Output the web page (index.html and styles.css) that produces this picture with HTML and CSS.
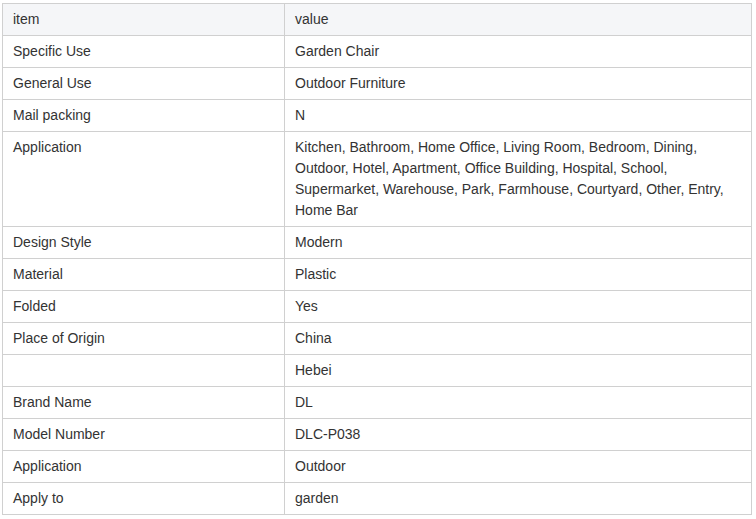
FILE: index.html
```html
<!DOCTYPE html>
<html>
<head>
<meta charset="utf-8">
<link rel="stylesheet" href="styles.css">
</head>
<body>
<table class="spec">
<colgroup><col class="c1"><col class="c2"></colgroup>
<thead>
<tr><th>item</th><th>value</th></tr>
</thead>
<tbody>
<tr><td>Specific Use</td><td>Garden Chair</td></tr>
<tr><td>General Use</td><td>Outdoor Furniture</td></tr>
<tr><td>Mail packing</td><td>N</td></tr>
<tr><td>Application</td><td>Kitchen, Bathroom, Home Office, Living Room, Bedroom, Dining, Outdoor, Hotel, Apartment, Office Building, Hospital, School, Supermarket, Warehouse, Park, Farmhouse, Courtyard, Other, Entry, Home Bar</td></tr>
<tr><td>Design Style</td><td>Modern</td></tr>
<tr><td>Material</td><td>Plastic</td></tr>
<tr><td>Folded</td><td>Yes</td></tr>
<tr><td>Place of Origin</td><td>China</td></tr>
<tr><td></td><td>Hebei</td></tr>
<tr><td>Brand Name</td><td>DL</td></tr>
<tr><td>Model Number</td><td>DLC-P038</td></tr>
<tr><td>Application</td><td>Outdoor</td></tr>
<tr><td>Apply to</td><td>garden</td></tr>
</tbody>
</table>
</body>
</html>
```

FILE: styles.css
```css
html, body {
  margin: 0;
  padding: 0;
  background: #fff;
}
body {
  padding: 3px 0 0 2px;
  font-family: "Liberation Sans", Arial, sans-serif;
  font-size: 14px;
  color: #333;
}
.spec {
  border-collapse: collapse;
  width: 750px;
  table-layout: fixed;
}
.c1 { width: 282px; }
.spec th, .spec td {
  border: 1px solid #d0d0d0;
  padding: 5px 10px;
  line-height: 21px;
  height: 21px;
  text-align: left;
  vertical-align: top;
  font-weight: normal;
}
.spec th {
  background: #f5f6f8;
}
```
